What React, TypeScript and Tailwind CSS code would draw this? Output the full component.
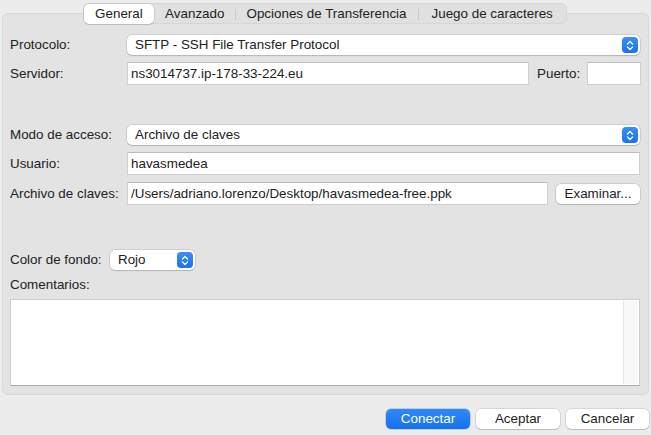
import React from 'react';

const FONT = "font-['Liberation_Sans','Helvetica_Neue',Arial,sans-serif]";

// ── Blue up/down stepper used by the popup buttons ─────────────────────────
function Stepper() {
  return (
    <div className="flex h-[16px] w-[16px] items-center justify-center rounded-[4px] bg-gradient-to-b from-[#3b8ff8] to-[#1873ee]">
      <svg width="8" height="11" viewBox="0 0 8 11" fill="none">
        <path d="M1.5 4 L4 1.5 L6.5 4" stroke="white" strokeWidth="1.3" strokeLinecap="round" strokeLinejoin="round" />
        <path d="M1.5 7 L4 9.5 L6.5 7" stroke="white" strokeWidth="1.3" strokeLinecap="round" strokeLinejoin="round" />
      </svg>
    </div>
  );
}

function Select({ value, className = '' }: { value: string; className?: string }) {
  return (
    <div
      className={`flex h-[20px] items-center justify-between rounded-[5px] bg-white pl-[8px] pr-[2px] shadow-[0_0_0_0.5px_rgba(0,0,0,0.18),0_1px_1px_rgba(0,0,0,0.12)] ${className}`}
    >
      <span className="leading-none">{value}</span>
      <Stepper />
    </div>
  );
}

function Input({ value = '', className = '' }: { value?: string; className?: string }) {
  return (
    <div
      className={`flex h-[23px] items-center border border-[#cfcfcf] border-t-[#bdbdbd] bg-white pl-[3px] ${className}`}
    >
      <span className="leading-none">{value}</span>
    </div>
  );
}

function PushButton({ label, primary = false, className = '' }: { label: string; primary?: boolean; className?: string }) {
  return (
    <div
      className={`flex h-[20px] items-center justify-center rounded-[5px] leading-none ${
        primary
          ? 'bg-gradient-to-b from-[#3089f8] to-[#1472ee] text-white shadow-[0_0_0_0.5px_rgba(0,60,160,0.35)]'
          : 'bg-white text-[#222] shadow-[0_0_0_0.5px_rgba(0,0,0,0.18),0_1px_1px_rgba(0,0,0,0.12)]'
      } ${className}`}
    >
      {label}
    </div>
  );
}

const TABS = [
  { label: 'General', w: 'w-[71px]' },
  { label: 'Avanzado', w: 'w-[80px]' },
  { label: 'Opciones de Transferencia', w: 'w-[184px]' },
  { label: 'Juego de caracteres', w: 'w-[148px]' },
];

function Row({ label, labelW = 'w-[117px]', children, className = '' }: { label: string; labelW?: string; children: React.ReactNode; className?: string }) {
  return (
    <div className={`flex items-center ${className}`}>
      <div className={`${labelW} shrink-0 leading-none`}>{label}</div>
      {children}
    </div>
  );
}

export default function App() {
  return (
    <div className={`h-[435px] w-[651px] overflow-hidden bg-[#ececec] pt-[3px] text-[13.4px] text-[#222] ${FONT}`}>
      {/* Tab bar */}
      <div className="relative z-10 ml-[83px] flex h-[21px] w-[484px] items-center rounded-[6px] border border-[#d6d6d6] bg-[#e0e0e0]">
        {TABS.map((t, i) => (
          <div key={t.label} className={`relative flex h-full items-center justify-center ${t.w}`}>
            {i === 0 ? (
              <div className="-ml-px flex h-[20px] w-full items-center justify-center rounded-[5px] bg-white leading-none shadow-[0_0_0_0.5px_rgba(0,0,0,0.15),0_1px_1px_rgba(0,0,0,0.12)]">
                {t.label}
              </div>
            ) : (
              <span className="leading-none">{t.label}</span>
            )}
            {i >= 2 && <div className="absolute left-0 top-[5px] h-[11px] w-px bg-[#c8c8c8]" />}
          </div>
        ))}
      </div>

      {/* Panel */}
      <div className="mx-[2px] -mt-[11px] h-[382px] rounded-[6px] border border-[#d8d8d8] bg-[#e3e3e3] pl-[7px] pr-[8px] pt-[21px]">
        <Row label="Protocolo:">
          <Select value="SFTP - SSH File Transfer Protocol" className="flex-1" />
        </Row>

        <Row label="Servidor:" className="mt-[7px]">
          <Input value="ns3014737.ip-178-33-224.eu" className="flex-1" />
          <div className="ml-[8px] w-[50px] shrink-0 leading-none">Puerto:</div>
          <Input className="w-[54px] -mr-px" />
        </Row>

        <Row label="Modo de acceso:" className="mt-[40px]">
          <Select value="Archivo de claves" className="flex-1" />
        </Row>

        <Row label="Usuario:" className="mt-[7px]">
          <Input value="havasmedea" className="flex-1" />
        </Row>

        <Row label="Archivo de claves:" className="mt-[7px]">
          <Input value="/Users/adriano.lorenzo/Desktop/havasmedea-free.ppk" className="flex-1" />
          <PushButton label="Examinar..." className="ml-[8px] w-[84px]" />
        </Row>

        <Row label="Color de fondo:" labelW="w-[100px]" className="mt-[45px]">
          <Select value="Rojo" className="w-[85px]" />
        </Row>

        <div className="mt-[7px] h-[16px] leading-[16px]">Comentarios:</div>

        <div className="mt-[6px] flex h-[87px] border border-[#cdcdcd] border-b-[#a9a9a9] bg-white">
          <div className="flex-1" />
          <div className="my-[1px] mr-[1px] w-[15px] border-l border-[#e6e6e6] bg-[#f8f8f8]" />
        </div>
      </div>

      {/* Footer buttons */}
      <div className="mt-[14px] flex justify-end gap-[6px] pr-[2px]">
        <PushButton label="Conectar" primary className="w-[84px]" />
        <PushButton label="Aceptar" className="w-[84px]" />
        <PushButton label="Cancelar" className="w-[83px]" />
      </div>
    </div>
  );
}
